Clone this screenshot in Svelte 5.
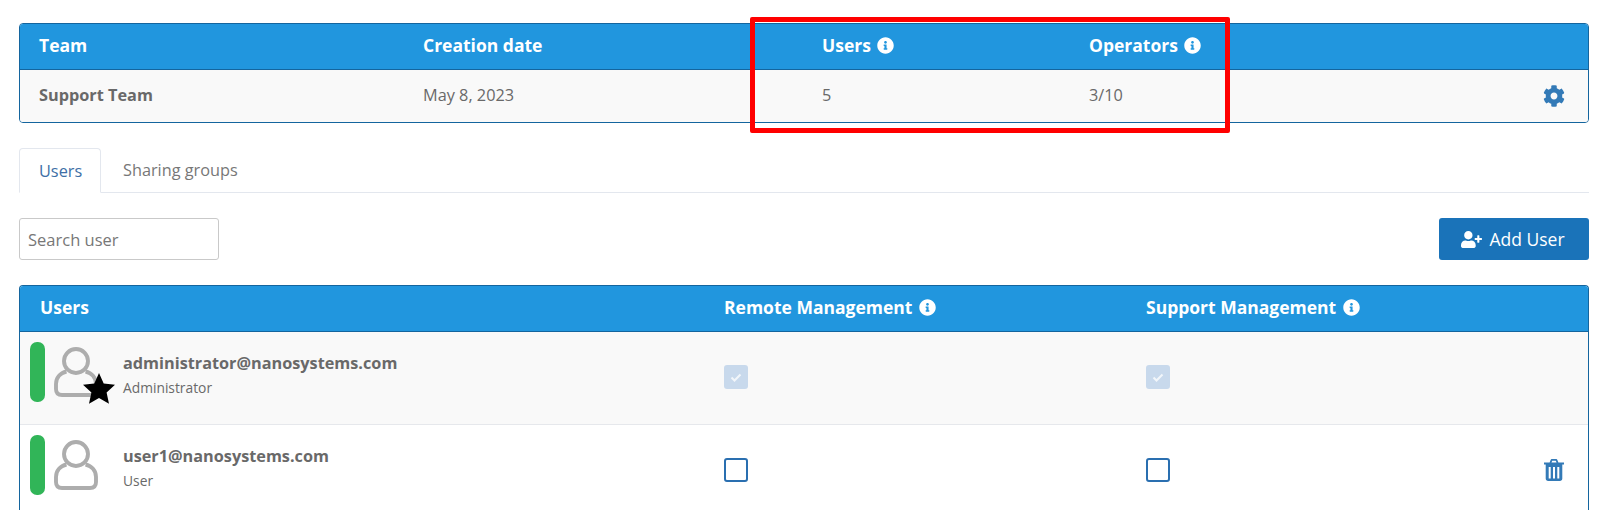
<script>
  const infoPath = "M256 8C119.043 8 8 119.083 8 256c0 136.997 111.043 248 248 248s248-111.003 248-248C504 119.083 392.957 8 256 8zm0 110c23.196 0 42 18.804 42 42s-18.804 42-42 42-42-18.804-42-42 18.804-42 42-42zm56 254c0 6.627-5.373 12-12 12h-88c-6.627 0-12-5.373-12-12v-24c0-6.627 5.373-12 12-12h12v-64h-12c-6.627 0-12-5.373-12-12v-24c0-6.627 5.373-12 12-12h64c6.627 0 12 5.373 12 12v100h12c6.627 0 12 5.373 12 12v24z";

  const users = [
    { email: "administrator@nanosystems.com", role: "Administrator", owner: true },
    { email: "user1@nanosystems.com", role: "User", owner: false },
  ];
</script>

<div class="page">
  <section class="card team">
    <div class="row head">
      <div>Team</div>
      <div>Creation date</div>
      <div>Users <svg class="info" viewBox="0 0 512 512"><path d={infoPath} /></svg></div>
      <div>Operators <svg class="info" viewBox="0 0 512 512"><path d={infoPath} /></svg></div>
    </div>
    <div class="row body">
      <div class="team-name">Support Team</div>
      <div>May 8, 2023</div>
      <div>5</div>
      <div>3/10</div>
      <svg class="gear" viewBox="0 0 512 512"><path d="M487.4 315.7l-42.6-24.6c4.3-23.2 4.3-47 0-70.2l42.6-24.6c4.9-2.8 7.1-8.6 5.5-14-11.1-35.6-30-67.8-54.7-94.6-3.8-4.1-10-5.1-14.8-2.3L380.8 110c-17.9-15.4-38.5-27.3-60.8-35.1V25.8c0-5.6-3.9-10.5-9.4-11.7-36.7-8.2-74.3-7.8-109.2 0-5.5 1.2-9.4 6.1-9.4 11.7V75c-22.2 7.9-42.8 19.8-60.8 35.1L88.7 85.5c-4.9-2.8-11-1.9-14.8 2.3-24.7 26.7-43.6 58.9-54.7 94.6-1.7 5.4.6 11.2 5.5 14L67.3 221c-4.3 23.2-4.3 47 0 70.2l-42.6 24.6c-4.9 2.8-7.1 8.6-5.5 14 11.1 35.6 30 67.8 54.7 94.6 3.8 4.1 10 5.1 14.8 2.3l42.6-24.6c17.9 15.4 38.5 27.3 60.8 35.1v49.2c0 5.6 3.9 10.5 9.4 11.7 36.7 8.2 74.3 7.8 109.2 0 5.5-1.2 9.4-6.1 9.4-11.7v-49.2c22.2-7.9 42.8-19.8 60.8-35.1l42.6 24.6c4.9 2.8 11 1.9 14.8-2.3 24.7-26.7 43.6-58.9 54.7-94.6 1.5-5.5-.7-11.3-5.6-14.1zM256 336c-44.1 0-80-35.9-80-80s35.9-80 80-80 80 35.9 80 80-35.9 80-80 80z" /></svg>
    </div>
  </section>

  <div class="highlight"></div>

  <nav class="tabs">
    <div class="tab active">Users</div>
    <div class="tab">Sharing groups</div>
  </nav>

  <div class="toolbar">
    <input class="search" type="text" placeholder="Search user" />
    <button class="add">
      <svg class="add-icon" viewBox="0 0 640 512"><path d="M624 208h-64v-64c0-8.8-7.2-16-16-16h-32c-8.8 0-16 7.2-16 16v64h-64c-8.8 0-16 7.2-16 16v32c0 8.8 7.2 16 16 16h64v64c0 8.8 7.2 16 16 16h32c8.8 0 16-7.2 16-16v-64h64c8.8 0 16-7.2 16-16v-32c0-8.8-7.2-16-16-16zm-400 48c70.7 0 128-57.3 128-128S294.7 0 224 0 96 57.3 96 128s57.3 128 128 128zm89.6 32h-16.7c-22.2 10.2-46.9 16-72.9 16s-50.6-5.8-72.9-16h-16.7C60.2 288 0 348.2 0 422.4V464c0 26.5 21.5 48 48 48h352c26.5 0 48-21.5 48-48v-41.6c0-74.2-60.2-134.4-134.4-134.4z" /></svg>
      Add User
    </button>
  </div>

  <section class="card members">
    <div class="m-row m-head">
      <div class="m-title">Users</div>
      <div>Remote Management <svg class="info" viewBox="0 0 512 512"><path d={infoPath} /></svg></div>
      <div>Support Management <svg class="info" viewBox="0 0 512 512"><path d={infoPath} /></svg></div>
    </div>
    {#each users as user}
      <div class="m-row m-user" class:owner={user.owner}>
        <div class="who">
          <span class="status"></span>
          <span class="avatar">
            <svg viewBox="0 0 44 50" width="44" height="50" fill="none" stroke="#adadad" stroke-width="3.9">
              <circle cx="22" cy="14" r="12" />
              <path d="M12.5 24.5 C6 26 2 31 2 37 V42 C2 46 4 48 8 48 H36 C40 48 42 46 42 42 V37 C42 31 38 26 31.5 24.5" />
            </svg>
            {#if user.owner}
              <svg class="star" viewBox="0 0 32 31"><polygon points="16,0 20.7,10.5 32,11.7 23.6,19.5 26,30.8 16,25 6,30.8 8.4,19.5 0,11.7 11.3,10.5" /></svg>
            {/if}
          </span>
          <div class="info-text">
            <div class="email">{user.email}</div>
            <div class="role">{user.role}</div>
          </div>
        </div>
        <div class="cell"><span class="check" class:on={user.owner}>{#if user.owner}<svg viewBox="0 0 24 24" width="24" height="24" fill="none" stroke="#f2f6fa" stroke-width="2"><path d="M7.5 12.5 L10.5 15.5 L16.5 9.5" /></svg>{/if}</span></div>
        <div class="cell"><span class="check" class:on={user.owner}>{#if user.owner}<svg viewBox="0 0 24 24" width="24" height="24" fill="none" stroke="#f2f6fa" stroke-width="2"><path d="M7.5 12.5 L10.5 15.5 L16.5 9.5" /></svg>{/if}</span></div>
        {#if !user.owner}
          <svg class="trash" viewBox="0 0 20 22">
            <path fill-rule="evenodd" d="M0 3.5 H5.6 L6.5 1.2 C6.8 .5 7.3 0 8.2 0 H11.8 C12.7 0 13.2 .5 13.5 1.2 L14.4 3.5 H20 V5.5 H18.3 V19.5 C18.3 21 17.3 22 15.8 22 H4.2 C2.7 22 1.7 21 1.7 19.5 V5.5 H0 Z M7.5 3.5 H12.5 L11.9 2 C11.8 1.8 11.7 1.7 11.4 1.7 H8.6 C8.3 1.7 8.2 1.8 8.1 2 Z M4.7 8 V19.5 H6.7 V8 Z M9 8 V19.5 H11 V8 Z M13.3 8 V19.5 H15.3 V8 Z" />
          </svg>
        {/if}
      </div>
    {/each}
  </section>
</div>

<style>
  :global(body) {
    overflow: hidden;
    background: #fff;
  }
  .page {
    position: relative;
    padding: 23px 9px 0 19px;
    font-family: "Open Sans", sans-serif;
    font-size: 16.3px;
    color: #696969;
  }
  .card {
    border: 1px solid #14659e;
    border-radius: 4px;
    overflow: hidden;
  }
  .row {
    display: grid;
    grid-template-columns: 384px 399px 267px 1fr;
    align-items: center;
    padding-left: 19px;
  }
  .head {
    box-sizing: border-box;
    height: 46px;
    padding-bottom: 3px;
    background: #2196de;
    border-bottom: 1px solid #14659e;
    color: #fff;
    font-size: 17.5px;
    font-weight: 700;
  }
  .body {
    position: relative;
    height: 52px;
    padding-bottom: 2px;
    box-sizing: border-box;
    background: #f9f9f9;
  }
  .team-name {
    font-weight: 700;
  }
  .info {
    width: 17px;
    height: 17px;
    fill: #fff;
    vertical-align: -2px;
    margin-left: 2px;
  }
  .gear {
    position: absolute;
    right: 23px;
    top: 15px;
    width: 22px;
    height: 22px;
    fill: #337ab7;
  }
  .highlight {
    position: absolute;
    left: 750px;
    top: 17px;
    width: 470px;
    height: 106px;
    border: 5px solid #ff0000;
    border-radius: 2px;
    pointer-events: none;
  }
  .tabs {
    display: flex;
    margin-top: 25px;
    height: 44px;
    border-bottom: 1px solid #e3e7ee;
  }
  .tab {
    padding: 0 22px;
    line-height: 44px;
    color: #777;
  }
  .tab.active {
    width: 82px;
    padding: 0 0 0 19px;
    color: #3e6fa6;
    border: 1px solid #e3e7ee;
    border-bottom: 1px solid #fff;
    border-radius: 4px 4px 0 0;
    height: 45px;
    box-sizing: border-box;
  }
  .toolbar {
    display: flex;
    justify-content: space-between;
    align-items: flex-start;
    margin-top: 25px;
  }
  .search {
    box-sizing: border-box;
    width: 200px;
    height: 42px;
    padding: 0 8px;
    border: 1px solid #c9c9c9;
    border-radius: 3px;
    font: inherit;
    font-size: 16.5px;
    color: #666;
  }
  .search::placeholder {
    color: #777;
    opacity: 1;
  }
  .add {
    display: flex;
    align-items: center;
    justify-content: center;
    gap: 7px;
    width: 150px;
    height: 42px;
    padding: 0 2px 0 0;
    border: none;
    border-radius: 3px;
    background: #1a73b9;
    color: #fff;
    font: inherit;
    font-size: 17.5px;
  }
  .add-icon {
    width: 21px;
    height: 17px;
    fill: #fff;
  }
  .members {
    margin-top: 25px;
    border-bottom: none;
    border-radius: 4px 4px 0 0;
  }
  .m-row {
    position: relative;
    display: grid;
    grid-template-columns: 704px 422px 1fr;
  }
  .m-head {
    box-sizing: border-box;
    height: 46px;
    padding-bottom: 3px;
    align-items: center;
    background: #2196de;
    border-bottom: 1px solid #14659e;
    color: #fff;
    font-size: 17.5px;
    font-weight: 700;
  }
  .m-title {
    padding-left: 20px;
  }
  .m-user {
    height: 92px;
    border-bottom: 1px solid #e6e8ec;
  }
  .m-user.owner {
    background: #f9f9f9;
  }
  .who {
    display: flex;
    align-items: flex-start;
    padding: 10px 0 0 10px;
  }
  .status {
    width: 15px;
    height: 60px;
    border-radius: 7px;
    background: #31b558;
  }
  .avatar {
    position: relative;
    width: 44px;
    height: 50px;
    margin: 5px 0 0 9px;
  }
  .star {
    position: absolute;
    left: 29px;
    top: 26px;
    width: 32px;
    height: 31px;
    fill: #000;
  }
  .info-text {
    margin: 9px 0 0 25px;
  }
  .email {
    font-size: 16.25px;
    font-weight: 700;
    line-height: 24px;
  }
  .role {
    margin-top: 1px;
    font-size: 13.8px;
    line-height: 24px;
  }
  .cell {
    padding-top: 33px;
  }
  .check {
    display: block;
    box-sizing: border-box;
    width: 24px;
    height: 24px;
    border: 2px solid #2a6fb0;
    border-radius: 3px;
  }
  .check.on {
    border: none;
    background: #c8d9ec;
  }
  .trash {
    position: absolute;
    right: 24px;
    top: 34px;
    width: 20px;
    height: 22px;
    fill: #337ab7;
  }
</style>
